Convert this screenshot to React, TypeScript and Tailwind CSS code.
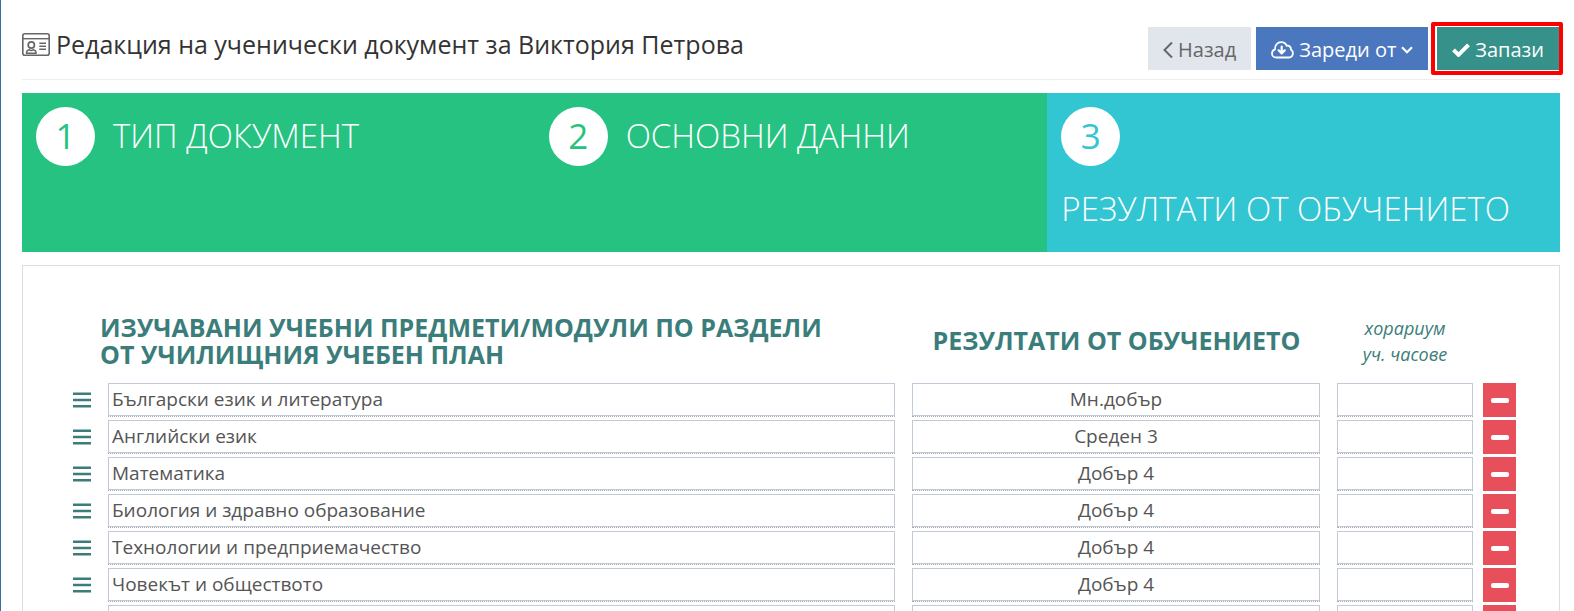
import React from 'react';

interface Subject {
  id: string;
  name: string;
  result: string;
}

const steps = [
  { id: 1, title: 'Тип документ', active: false },
  { id: 2, title: 'Основни данни', active: false },
  { id: 3, title: 'Резултати от обучението', active: true },
];

const subjects: Subject[] = [
  { id: 'bel', name: 'Български език и литература', result: 'Мн.добър' },
  { id: 'english', name: 'Английски език', result: 'Среден 3' },
  { id: 'math', name: 'Математика', result: 'Добър 4' },
  { id: 'biology', name: 'Биология и здравно образование', result: 'Добър 4' },
  { id: 'tech', name: 'Технологии и предприемачество', result: 'Добър 4' },
  { id: 'society', name: 'Човекът и обществото', result: 'Добър 4' },
  { id: 'empty', name: '', result: '' },
];

const inputClass = 'block h-[33px] w-full border border-[#c2cad8] bg-white px-[3px] pb-px text-[19px] text-[#555] outline-none';

function CardIcon() {
  return (
    <svg width="28" height="28" viewBox="0 0 28 28" fill="none" stroke="#666" aria-hidden="true">
      <rect x="0.8" y="3.8" width="26.4" height="21.4" rx="2" strokeWidth="1.6" />
      <path d="M1 8.700h26" strokeWidth="1.4" />
      <circle cx="9.300" cy="15" r="3.100" strokeWidth="1.700" />
      <path d="M4.600 23.200v-1.200c0-1.600 1.400-1.900 2.800-2.300 1 .9 2.800.9 3.800 0 1.400.4 2.800.7 2.800 2.300v1.200z" strokeWidth="1.500" />
      <path d="M17.300 13.300h6.700M17.300 16.300h6.700M17.300 19.300h6.700" strokeWidth="1.500" />
    </svg>
  );
}

function CloudIcon() {
  return (
    <svg width="23" height="18" viewBox="0 0 23 18" fill="none" stroke="currentColor" strokeWidth="1.8" strokeLinecap="round" strokeLinejoin="round" aria-hidden="true">
      <path d="M5.300 16.500C2.800 16.500 1 14.700 1 12.400c0-2 1.200-3.400 3-4C3.600 4.300 6.400 1.200 10.100 1.200c2.700 0 4.700 1.400 5.600 3.600 2.500-.6 4.500 1.200 4.200 3.700 1.500.9 2.100 2.200 2 3.800-.1 2.400-1.800 4.200-4.200 4.200z" />
      <path d="M10.700 5.500v6.500M7.600 9.300l3.100 3.100 3.100-3.100" strokeWidth="2.200" />
    </svg>
  );
}

export default function App() {
  return (
    <div className="border-l border-[#3a6ea5] bg-white pl-[21px] pr-[14px] pt-[27px] font-['Open_Sans','Noto_Sans',sans-serif]">
      <header className="flex items-start justify-between border-b border-[#eee] pb-[9px]">
        <h1 className="flex items-center gap-[6px] text-[25px] leading-[34px] text-[#333]">
          <CardIcon />
          Редакция на ученически документ за Виктория Петрова
        </h1>
        <div className="flex text-[20px]">
          <button type="button" className="mr-[5px] flex h-[43px] items-center gap-[5px] bg-[#e1e5ec] px-[15px] pt-[2px] text-[#666]">
            <svg width="10" height="18" viewBox="0 0 10 18" fill="none" stroke="currentColor" strokeWidth="2" aria-hidden="true">
              <path d="M9 1.500 1.500 9 9 16.500" />
            </svg>
            Назад
          </button>
          <button type="button" className="mr-[9px] flex h-[43px] items-center gap-[5px] bg-[#4b77be] px-[15px] pt-[2px] text-white">
            <CloudIcon />
            Зареди от
            <svg width="12" height="8" viewBox="0 0 12 8" fill="none" stroke="currentColor" strokeWidth="2.200" aria-hidden="true">
              <path d="m1 1.300 5 5 5-5" />
            </svg>
          </button>
          <button type="button" className="relative flex h-[43px] items-center gap-[5px] bg-[#35918a] pl-[15px] pr-4 pt-[2px] text-white">
            <svg width="18" height="14" viewBox="0 0 18 14" fill="none" stroke="currentColor" strokeWidth="4" aria-hidden="true">
              <path d="m1.500 6.800 5 5L16.500 1.800" />
            </svg>
            Запази
            <span className="absolute -bottom-[5px] -left-[6px] -right-[3px] -top-[5px] rounded-xs border-4 border-[#ff0000]" />
          </button>
        </div>
      </header>

      <ol className="mt-[13px] grid grid-cols-3">
        {steps.map((step) => (
          <li
            key={step.id}
            className={
              step.active
                ? 'flex flex-wrap content-start gap-x-[18px] gap-y-[14px] bg-[#32c5d2] p-[14px] text-[#32c5d2]'
                : 'flex flex-wrap content-start gap-x-[18px] gap-y-[14px] bg-[#26c281] p-[14px] text-[#26c281]'
            }
          >
            <span className="flex size-[59px] items-center justify-center rounded-full bg-white text-[35px]">{step.id}</span>
            <span className="text-[33px] font-light uppercase leading-[58px] text-white">{step.title}</span>
          </li>
        ))}
      </ol>

      <main className="mt-[13px] border border-[#ddd] pb-10 pl-[50px] pr-[43px] pt-[45px]">
        <table className="w-full table-fixed border-collapse">
          <thead className="text-[#3b7d7a]">
            <tr className="h-[72px]">
              <td className="w-[27px]" />
              <th className="pb-[13px] text-left text-[25px] font-bold uppercase leading-[27px]">
                Изучавани учебни предмети/модули по раздели
                <br />
                от училищния учебен план
              </th>
              <th className="w-[425px] pb-[13px] text-center text-[25px] font-bold uppercase leading-[27px]">Резултати от обучението</th>
              <th className="w-[152px] pb-[13px] text-center text-[18px] font-normal italic leading-[26px]">
                хорариум
                <br />
                уч. часове
              </th>
              <td className="w-[35px]" />
            </tr>
          </thead>
          <tbody>
            {subjects.map((subject) => (
              <tr key={subject.id}>
                <td className="pb-[3px]">
                  <button type="button" aria-label="Премести" className="block cursor-move text-[#3b7d7a]">
                    <svg width="18" height="16" viewBox="0 0 18 16" fill="currentColor" aria-hidden="true">
                      <path d="M0 .5h18v2.600H0zM0 6.700h18v2.600H0zM0 12.900h18v2.600H0z" />
                    </svg>
                  </button>
                </td>
                <td className="pb-[3px] pl-2 pr-[9px]">
                  <div className="border-b border-dotted border-[#aaa]">
                    <input aria-label="Предмет" defaultValue={subject.name} className={inputClass} />
                  </div>
                </td>
                <td className="pb-[3px] pl-2 pr-[9px]">
                  <div className="border-b border-dotted border-[#aaa]">
                    <input aria-label="Резултат" defaultValue={subject.result} className={`${inputClass} text-center`} />
                  </div>
                </td>
                <td className="px-2 pb-[3px]">
                  <div className="border-b border-dotted border-[#aaa]">
                    <input aria-label="Хорариум" className={`${inputClass} text-center`} />
                  </div>
                </td>
                <td className="pb-[3px] pl-[2px]">
                  <button type="button" aria-label="Премахни" className="flex h-[34px] w-full items-center justify-center bg-[#e7505a]">
                    <span className="h-[5px] w-[18px] rounded-xs bg-white" />
                  </button>
                </td>
              </tr>
            ))}
          </tbody>
        </table>
      </main>
    </div>
  );
}
